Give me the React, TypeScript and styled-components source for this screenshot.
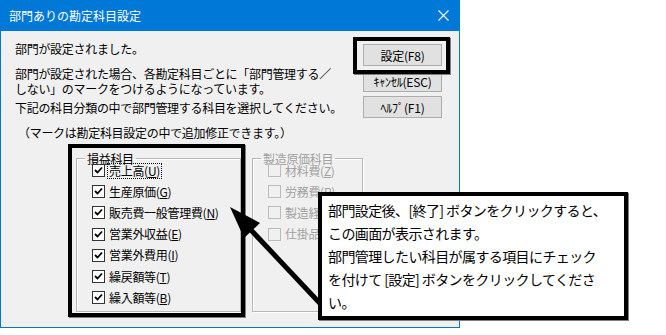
import * as React from "react";
import styled, { createGlobalStyle } from "styled-components";

const GlobalStyle = createGlobalStyle`
    html, body {
        margin: 0;
        padding: 0;
        background: #ffffff;
    }
    body {
        font-family: "Noto Sans CJK JP", "Liberation Sans", sans-serif;
        font-size: 12px;
        color: #000000;
    }
`;

// Whole picture: dialog on a white page with annotations drawn over it
const Stage = styled.div`
    position: relative;
    width: 666px;
    height: 335px;
    overflow: hidden;
`;

const Dialog = styled.div`
    width: 460px;
    height: 328px;
    box-sizing: border-box;
    border: 1px solid #0078d7;
    border-top: none;
    display: flex;
    flex-direction: column;
    background: #f0f0f0;
`;

const TitleBar = styled.div`
    height: 31px;
    background: #0078d7;
    color: #ffffff;
    display: flex;
    align-items: center;
    justify-content: space-between;
    padding: 0 10px 0 8px;
    font-size: 12px;
`;

const CloseIcon = () => (
    <svg width="11" height="11" viewBox="0 0 11 11">
        <path d="M0.5 0.5 L10.5 10.5 M10.5 0.5 L0.5 10.5" stroke="#ffffff" strokeWidth="1.1" />
    </svg>
);

const Body = styled.div`
    flex: 1;
    display: flex;
    padding: 10px 0 0 14px;
`;

const MainColumn = styled.div`
    flex: 1;
    display: flex;
    flex-direction: column;
`;

const Line = styled.p<{ $top: number; $indent?: number }>`
    margin: ${props => props.$top}px 0 0 ${props => props.$indent || 0}px;
    line-height: 15px;
    white-space: nowrap;
    letter-spacing: -0.3px;
`;

const GroupRow = styled.div`
    display: flex;
    gap: 11px;
    margin: 11px 0 0 61px;
`;

const Group = styled.fieldset<{ $width: number; $disabled?: boolean }>`
    width: ${props => props.$width}px;
    height: 161px;
    box-sizing: border-box;
    margin: 0;
    padding: 0 0 0 8px;
    border: 1px solid #b8b8b8;
    box-shadow: inset 1px 1px 0 #ffffff, 1px 1px 0 #ffffff;
    color: ${props => props.$disabled ? "#a0a0a0" : "#000000"};
`;

const GroupTitle = styled.legend`
    padding: 0 2px;
    line-height: 15px;
    letter-spacing: -0.3px;
`;

const CheckList = styled.div`
    display: flex;
    flex-direction: column;
    margin: -6px 0 0 7px;
`;

const CheckRow = styled.div`
    height: 21.2px;
    display: flex;
    align-items: center;
    gap: 3px;
    white-space: nowrap;
    letter-spacing: -0.3px;
`;

const Box = styled.span<{ $disabled?: boolean }>`
    width: 13px;
    height: 13px;
    box-sizing: border-box;
    border: 1px solid ${props => props.$disabled ? "#bcbcbc" : "#333333"};
    background: ${props => props.$disabled ? "#f0f0f0" : "#ffffff"};
    display: flex;
    align-items: center;
    justify-content: center;
`;

const CheckLabel = styled.span<{ $focused?: boolean }>`
    line-height: 14px;
    padding: 0 1px;
    outline: ${props => props.$focused ? "1px dotted #000000" : "none"};
`;

const Tick = () => (
    <svg width="9" height="9" viewBox="0 0 9 9">
        <path d="M1 4 L3.5 6.5 L8 1.5" stroke="#000000" strokeWidth="1.8" fill="none" />
    </svg>
);

const ButtonColumn = styled.div`
    width: 80px;
    display: flex;
    flex-direction: column;
    gap: 4px;
    margin: 3px 17px 0 0;
`;

const DialogButton = styled.div`
    height: 22px;
    box-sizing: border-box;
    border: 1px solid #adadad;
    background: #e1e1e1;
    display: flex;
    align-items: center;
    justify-content: center;
    font-size: 12px;
    letter-spacing: -0.2px;
`;

// Black annotation frames laid over the screenshot
const Highlight = styled.div<{ $x: number; $y: number; $w: number; $h: number }>`
    position: absolute;
    left: ${props => props.$x}px;
    top: ${props => props.$y}px;
    width: ${props => props.$w}px;
    height: ${props => props.$h}px;
    box-sizing: border-box;
    border: 4px solid #000000;
    box-shadow: 1px 1px 0 #808080;
`;

const Callout = styled.div`
    position: absolute;
    left: 318px;
    top: 192px;
    width: 310px;
    height: 128px;
    box-sizing: border-box;
    border: 4px solid #000000;
    box-shadow: 1px 1px 0 #808080;
    background: #ffffff;
    padding: 3px 0 0 6px;
    font-size: 14px;
    line-height: 23px;
    letter-spacing: -0.6px;
    white-space: nowrap;
`;

const ArrowLayer = styled.svg`
    position: absolute;
    left: 0;
    top: 0;
    pointer-events: none;
`;

interface Item {
    name: string,
    key: string
}

const profitItems: Item[] = [
    { name: "売上高", key: "U" },
    { name: "生産原価", key: "G" },
    { name: "販売費一般管理費", key: "N" },
    { name: "営業外収益", key: "E" },
    { name: "営業外費用", key: "I" },
    { name: "繰戻額等", key: "T" },
    { name: "繰入額等", key: "B" },
];

const costItems: Item[] = [
    { name: "材料費", key: "Z" },
    { name: "労務費", key: "R" },
    { name: "製造経費", key: "K" },
    { name: "仕掛品振替", key: "S" },
];

const App = () => {
    return (
        <Stage>
            <GlobalStyle />
            <Dialog>
                <TitleBar>
                    <span>部門ありの勘定科目設定</span>
                    <CloseIcon />
                </TitleBar>
                <Body>
                    <MainColumn>
                        <Line $top={0}>部門が設定されました。</Line>
                        <Line $top={10}>部門が設定された場合、各勘定科目ごとに「部門管理する／<br />しない」のマークをつけるようになっています。</Line>
                        <Line $top={4}>下記の科目分類の中で部門管理する科目を選択してください。</Line>
                        <Line $top={10} $indent={3}>（マークは勘定科目設定の中で追加修正できます。）</Line>
                        <GroupRow>
                            <Group $width={165}>
                                <GroupTitle>損益科目</GroupTitle>
                                <CheckList>
                                    {profitItems.map((item, i) => (
                                        <CheckRow key={item.key}>
                                            <Box><Tick /></Box>
                                            <CheckLabel $focused={i === 0}>{item.name}(<u>{item.key}</u>)</CheckLabel>
                                        </CheckRow>
                                    ))}
                                </CheckList>
                            </Group>
                            <Group $width={111} $disabled>
                                <GroupTitle>製造原価科目</GroupTitle>
                                <CheckList>
                                    {costItems.map(item => (
                                        <CheckRow key={item.key}>
                                            <Box $disabled />
                                            <CheckLabel>{item.name}(<u>{item.key}</u>)</CheckLabel>
                                        </CheckRow>
                                    ))}
                                </CheckList>
                            </Group>
                        </GroupRow>
                    </MainColumn>
                    <ButtonColumn>
                        <DialogButton>設定(F8)</DialogButton>
                        <DialogButton>ｷｬﾝｾﾙ(ESC)</DialogButton>
                        <DialogButton>ﾍﾙﾌﾟ(F1)</DialogButton>
                    </ButtonColumn>
                </Body>
            </Dialog>

            <Highlight $x={353} $y={37} $w={97} $h={37} />
            <Highlight $x={68} $y={144} $w={177} $h={173} />
            <ArrowLayer width="666" height="335" viewBox="0 0 666 335">
                <line x1="250" y1="229" x2="330" y2="314" stroke="#000000" strokeWidth="5" />
                <polygon points="230,207 244,238 260,223" fill="#000000" />
            </ArrowLayer>
            <Callout>
                部門設定後、[終了] ボタンをクリックすると、<br />
                この画面が表示されます。<br />
                部門管理したい科目が属する項目にチェック<br />
                を付けて [設定] ボタンをクリックしてくださ<br />
                い。
            </Callout>
        </Stage>
    );
};

export default App;
